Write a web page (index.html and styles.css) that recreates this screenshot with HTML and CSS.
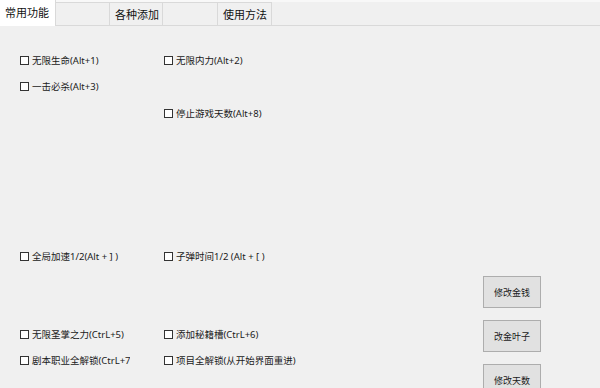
FILE: index.html
```html
<!DOCTYPE html>
<html>
<head>
<meta charset="utf-8">
<link rel="stylesheet" href="styles.css">
</head>
<body>
<div class="tabs">
  <div class="tab sel">常用功能</div>
  <div class="tab w54"></div>
  <div class="tab w53">各种添加</div>
  <div class="tab w55"></div>
  <div class="tab w54">使用方法</div>
</div>
<div class="panel">
  <div class="checks">
    <label class="cb"><span class="box"></span>无限生命(Alt+1)</label>
    <label class="cb"><span class="box"></span>无限内力(Alt+2)</label>
    <label class="cb"><span class="box"></span>一击必杀(Alt+3)</label>
    <span></span>
    <span></span>
    <label class="cb"><span class="box"></span>停止游戏天数(Alt+8)</label>
    <label class="cb"><span class="box"></span>全局加速1/2(Alt + ] )</label>
    <label class="cb"><span class="box"></span>子弹时间1/2 (Alt + [ )</label>
    <label class="cb"><span class="box"></span>无限圣掌之力(CtrL+5)</label>
    <label class="cb"><span class="box"></span>添加秘籍槽(CtrL+6)</label>
    <label class="cb clip"><span class="box"></span>剧本职业全解锁(CtrL+7)</label>
    <label class="cb"><span class="box"></span>项目全解锁(从开始界面重进)</label>
  </div>
  <div class="buttons">
    <button class="btn">修改金钱</button>
    <button class="btn">改金叶子</button>
    <button class="btn">修改天数</button>
  </div>
</div>
</body>
</html>
```
FILE: styles.css
```css
html, body {
  margin: 0;
  padding: 0;
  background: #f0f0f0;
  font-family: "Noto Sans", "Noto Sans CJK SC", sans-serif;
  color: #1a1a1a;
  overflow: hidden;
}
.tabs {
  display: flex;
  align-items: flex-end;
  height: 26px;
  box-sizing: border-box;
  border-bottom: 1px solid #d9d9d9;
  background: linear-gradient(#f8f8f8 0, #f8f8f8 2px, #f0f0f0 2px);
}
.tab {
  height: 23px;
  box-sizing: border-box;
  border: 1px solid #d9d9d9;
  border-bottom: none;
  border-left: none;
  background: #f0f0f0;
  font-family: "Noto Sans CJK SC", sans-serif;
  font-size: 11px;
  line-height: 22px;
  padding-left: 5px;
  color: #111;
}
.tab.sel {
  width: 56px;
  height: 27px;
  margin-bottom: -1px;
  background: #ffffff;
  border: none;
  border-right: 1px solid #d9d9d9;
  line-height: 26px;
  padding-left: 5px;
}
.w54 { width: 54px; }
.w53 { width: 53px; }
.w55 { width: 55px; }
.panel {
  display: flex;
  padding-top: 27px;
  padding-left: 20px;
}
.checks {
  display: grid;
  grid-template-columns: 144px 170px;
  grid-template-rows: 26px 27px 143px 78px 26px 14px;
}
.cb {
  display: flex;
  align-items: center;
  height: 14px;
  font-size: 9.5px;
  white-space: nowrap;
  color: #1a1a1a;
}
.cb.clip {
  width: 110px;
  overflow: hidden;
}
.box {
  width: 7px;
  height: 7px;
  border: 1px solid #333;
  background: #fff;
  margin-right: 3px;
  flex: none;
}
.buttons {
  display: flex;
  flex-direction: column;
  gap: 12px;
  margin-left: 149px;
  margin-top: 223px;
}
.btn {
  width: 58px;
  height: 32px;
  background: #e1e1e1;
  border: 1px solid #adadad;
  border-radius: 0;
  font-family: "Noto Sans CJK SC", sans-serif;
  font-size: 9px;
  color: #1a1a1a;
  padding: 0;
}
```
